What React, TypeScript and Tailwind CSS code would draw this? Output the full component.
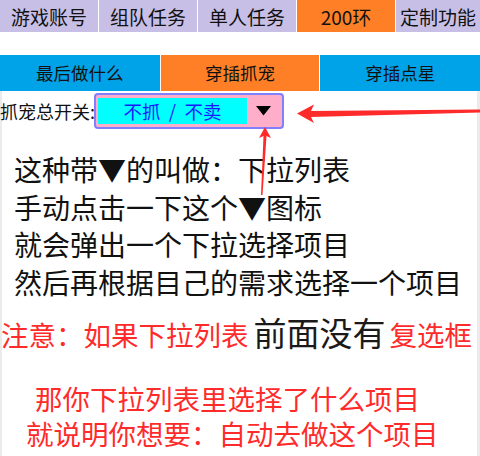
import React from "react";

const top = ["游戏账号", "组队任务", "单人任务", "200环", "定制功能"];

export default function App() {
  return (
    <div className="relative w-[480px] h-[456px] bg-white overflow-hidden font-['Noto_Sans_CJK_SC',sans-serif] text-[#111]">
      {/* top tabs */}
      <div className="flex gap-px h-[32px] bg-white">
        {top.map((t, i) => (
          <div
            key={t}
            className={
              "flex items-center justify-center text-[19px] leading-none " +
              (i === 4 ? "w-[84px] " : "w-[98px] ") +
              (i === 3 ? "bg-[#ff7f27]" : "bg-[#c8bfe7]")
            }
          >
            {t}
          </div>
        ))}
      </div>
      <div className="h-[23px]" />
      {/* second tabs */}
      <div className="flex gap-px h-[36px] bg-white">
        <div className="w-[160px] bg-[#00a2e8] flex items-center justify-center text-[17.5px] leading-none">最后做什么</div>
        <div className="w-[159px] bg-[#ff7f27] flex items-center justify-center text-[17.5px] leading-none">穿插抓宠</div>
        <div className="w-[160px] bg-[#00a2e8] flex items-center justify-center text-[17.5px] leading-none">穿插点星</div>
      </div>
      {/* body with side strips */}
      <div className="flex h-[365px]">
        <div className="w-[2px] bg-[#ebebeb]" />
        <div className="flex-1 flex flex-col">
          <div className="flex items-center h-[40px]">
            <div className="text-[18px] leading-none w-[94px] -ml-[2px] whitespace-nowrap">抓宠总开关:</div>
            <div className="w-[190px] h-[36px] border-2 border-[#7f7fff] rounded-[4px] bg-[#ffaec9] flex items-center p-[2px]">
              <div className="w-[149px] h-[26px] bg-[#00ffff] flex items-center justify-center text-[#1a1aff] text-[18.5px] leading-none whitespace-pre">
                不抓  /  不卖
              </div>
              <div className="flex-1 flex items-center justify-center">
                <svg width="15" height="10" viewBox="0 0 15 10">
                  <polygon points="0,0 15,0 7.5,9.5" fill="#000" />
                </svg>
              </div>
            </div>
          </div>
          <div className="pl-[12px] pt-[20px] text-[28px] leading-[37.5px] whitespace-nowrap">
            <div>这种带▼的叫做：下拉列表</div>
            <div>手动点击一下这个▼图标</div>
            <div>就会弹出一个下拉选择项目</div>
            <div>然后再根据目己的需求选择一个项目</div>
          </div>
          <div className="mt-[15px] -ml-[1px] flex items-baseline whitespace-nowrap leading-none">
            <span className="text-[#ff2b2b] text-[27.5px]">注意：如果下拉列表</span>
            <span className="text-[#1a1a1a] text-[33px] ml-[5px]">前面没有</span>
            <span className="text-[#ff2b2b] text-[27.5px] ml-[4px]">复选框</span>
          </div>
          <div className="mt-[32px] text-[#ff2b2b] text-[27.5px] leading-[35px] whitespace-nowrap">
            <div className="pl-[33px]">那你下拉列表里选择了什么项目</div>
            <div className="pl-[24px]">就说明你想要：自动去做这个项目</div>
          </div>
        </div>
        <div className="w-[3px] bg-[#ebebeb]" />
      </div>
      {/* red arrows overlay */}
      <svg className="absolute left-0 top-0 pointer-events-none" width="480" height="456" viewBox="0 0 480 456">
        <polygon points="297,113.5 314,104.5 311,111 480,109.5 480,112.5 311,117 314,123" fill="#ff2a2a" />
        <polygon points="265,127 271,138 266.5,136 262.5,195 261,195 263.5,136 259,138" fill="#ff2a2a" />
      </svg>
    </div>
  );
}
